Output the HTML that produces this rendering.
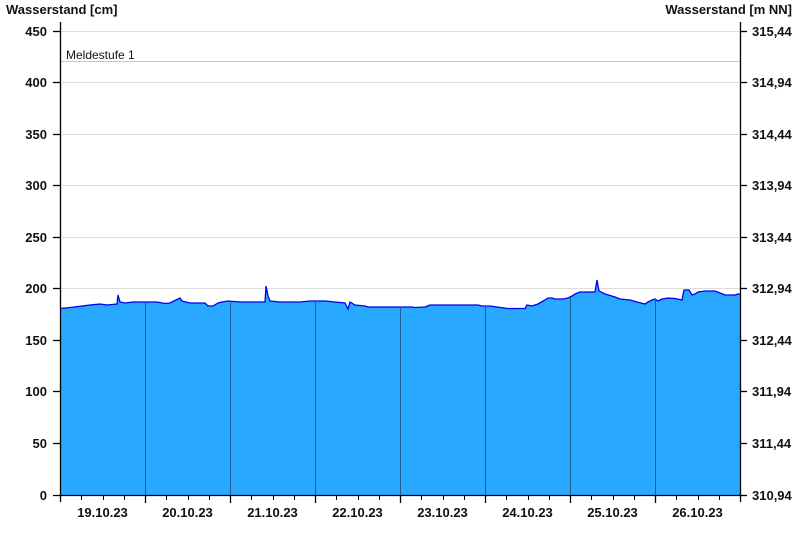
<!DOCTYPE html>
<html><head><meta charset="utf-8"><style>
html,body{margin:0;padding:0;background:#fff;}
svg{display:block;}
text{font-family:"Liberation Sans",Arial,sans-serif;}
.b{font-weight:bold;font-size:13px;fill:#111;}
</style></head><body>
<svg width="800" height="550" viewBox="0 0 800 550" xmlns="http://www.w3.org/2000/svg">
<rect width="800" height="550" fill="#fff"/>
<g stroke="#dcdcdc" stroke-width="1">
<line x1="60" x2="740" y1="31.5" y2="31.5"/>
<line x1="60" x2="740" y1="82.5" y2="82.5"/>
<line x1="60" x2="740" y1="134.5" y2="134.5"/>
<line x1="60" x2="740" y1="185.5" y2="185.5"/>
<line x1="60" x2="740" y1="237.5" y2="237.5"/>
<line x1="60" x2="740" y1="288.5" y2="288.5"/>
</g>
<line x1="60" x2="740" y1="61.5" y2="61.5" stroke="#f0c850" stroke-width="1"/>
<text x="66" y="59" font-size="12" fill="#111">Meldestufe 1</text>
<polygon fill="#29a8ff" stroke="none" points="60,495 60,308.5 70,307.5 78,306.5 90,305 100,304 107,305 117,304 118,295 120,302 125,303 133,302 145,302 157,302 165,303.5 170,303 180,298 182,301 190,303 205,303 208,306 213,306 218,303 222,302 228,301 240,302 248,302 265,302 266,286 268,296 270,301 280,302 300,302 310,301 325,301 335,302 345,303 348,309 350,302 355,305 365,306 368,307 412,307 415,307.5 425,307 430,305 478,305 482,306 490,306 497,307 508,308.5 525,308.5 527,305 532,306 538,304 545,300 548,298 552,298 555,299 563,299 568,298 572,296 575,294 580,292 595,292 597,280 599,291 605,294 615,297 620,299 630,300 637,302 645,304 648,302 652,300 655,299 658,301 662,299 668,298 675,298.5 682,300 684,290 689,290 692,295 695,294 698,292 705,291 715,291 720,293 725,295 735,295 738,294 740,294 740,495"/>
<polyline fill="none" stroke="#0000ee" stroke-width="1.3" points="60,308.5 70,307.5 78,306.5 90,305 100,304 107,305 117,304 118,295 120,302 125,303 133,302 145,302 157,302 165,303.5 170,303 180,298 182,301 190,303 205,303 208,306 213,306 218,303 222,302 228,301 240,302 248,302 265,302 266,286 268,296 270,301 280,302 300,302 310,301 325,301 335,302 345,303 348,309 350,302 355,305 365,306 368,307 412,307 415,307.5 425,307 430,305 478,305 482,306 490,306 497,307 508,308.5 525,308.5 527,305 532,306 538,304 545,300 548,298 552,298 555,299 563,299 568,298 572,296 575,294 580,292 595,292 597,280 599,291 605,294 615,297 620,299 630,300 637,302 645,304 648,302 652,300 655,299 658,301 662,299 668,298 675,298.5 682,300 684,290 689,290 692,295 695,294 698,292 705,291 715,291 720,293 725,295 735,295 738,294 740,294"/>
<g stroke="#1f5f8f" stroke-width="1">
<line x1="145.5" x2="145.5" y1="302" y2="495"/>
<line x1="230.5" x2="230.5" y1="301" y2="495"/>
<line x1="315.5" x2="315.5" y1="301" y2="495"/>
<line x1="400.5" x2="400.5" y1="307" y2="495"/>
<line x1="485.5" x2="485.5" y1="306" y2="495"/>
<line x1="570.5" x2="570.5" y1="297" y2="495"/>
<line x1="655.5" x2="655.5" y1="299" y2="495"/>
</g>
<g stroke="#000" stroke-width="1.3">
<line x1="60.5" x2="60.5" y1="22" y2="502"/>
<line x1="740.5" x2="740.5" y1="22" y2="502"/>
<line x1="53" x2="740" y1="495.5" y2="495.5"/>
<line x1="53" x2="60" y1="31.5" y2="31.5"/><line x1="53" x2="60" y1="82.5" y2="82.5"/><line x1="53" x2="60" y1="134.5" y2="134.5"/><line x1="53" x2="60" y1="185.5" y2="185.5"/><line x1="53" x2="60" y1="237.5" y2="237.5"/><line x1="53" x2="60" y1="288.5" y2="288.5"/><line x1="53" x2="60" y1="340.5" y2="340.5"/><line x1="53" x2="60" y1="391.5" y2="391.5"/><line x1="53" x2="60" y1="443.5" y2="443.5"/>
<line x1="740" x2="747" y1="31.5" y2="31.5"/><line x1="740" x2="747" y1="82.5" y2="82.5"/><line x1="740" x2="747" y1="134.5" y2="134.5"/><line x1="740" x2="747" y1="185.5" y2="185.5"/><line x1="740" x2="747" y1="237.5" y2="237.5"/><line x1="740" x2="747" y1="288.5" y2="288.5"/><line x1="740" x2="747" y1="340.5" y2="340.5"/><line x1="740" x2="747" y1="391.5" y2="391.5"/><line x1="740" x2="747" y1="443.5" y2="443.5"/><line x1="740" x2="747" y1="495.5" y2="495.5"/>
<line x1="145.5" x2="145.5" y1="495" y2="503"/><line x1="230.5" x2="230.5" y1="495" y2="503"/><line x1="315.5" x2="315.5" y1="495" y2="503"/><line x1="400.5" x2="400.5" y1="495" y2="503"/><line x1="485.5" x2="485.5" y1="495" y2="503"/><line x1="570.5" x2="570.5" y1="495" y2="503"/><line x1="655.5" x2="655.5" y1="495" y2="503"/>
</g>
<g stroke="#000" stroke-width="1">
<line x1="81.5" x2="81.5" y1="495" y2="500"/><line x1="103.5" x2="103.5" y1="495" y2="500"/><line x1="124.5" x2="124.5" y1="495" y2="500"/>
<line x1="166.5" x2="166.5" y1="495" y2="500"/><line x1="188.5" x2="188.5" y1="495" y2="500"/><line x1="209.5" x2="209.5" y1="495" y2="500"/>
<line x1="251.5" x2="251.5" y1="495" y2="500"/><line x1="273.5" x2="273.5" y1="495" y2="500"/><line x1="294.5" x2="294.5" y1="495" y2="500"/>
<line x1="336.5" x2="336.5" y1="495" y2="500"/><line x1="358.5" x2="358.5" y1="495" y2="500"/><line x1="379.5" x2="379.5" y1="495" y2="500"/>
<line x1="421.5" x2="421.5" y1="495" y2="500"/><line x1="443.5" x2="443.5" y1="495" y2="500"/><line x1="464.5" x2="464.5" y1="495" y2="500"/>
<line x1="506.5" x2="506.5" y1="495" y2="500"/><line x1="528.5" x2="528.5" y1="495" y2="500"/><line x1="549.5" x2="549.5" y1="495" y2="500"/>
<line x1="591.5" x2="591.5" y1="495" y2="500"/><line x1="613.5" x2="613.5" y1="495" y2="500"/><line x1="634.5" x2="634.5" y1="495" y2="500"/>
<line x1="676.5" x2="676.5" y1="495" y2="500"/><line x1="698.5" x2="698.5" y1="495" y2="500"/><line x1="719.5" x2="719.5" y1="495" y2="500"/>
</g>
<text class="b" x="6" y="14">Wasserstand [cm]</text>
<text class="b" x="792" y="14" text-anchor="end">Wasserstand [m NN]</text>
<g class="b" text-anchor="end">
<text class="b" x="47" y="36">450</text><text class="b" x="47" y="87">400</text><text class="b" x="47" y="139">350</text><text class="b" x="47" y="190">300</text><text class="b" x="47" y="242">250</text><text class="b" x="47" y="293">200</text><text class="b" x="47" y="345">150</text><text class="b" x="47" y="396">100</text><text class="b" x="47" y="448">50</text><text class="b" x="47" y="500">0</text>
</g>
<text class="b" x="752" y="36">315,44</text><text class="b" x="752" y="87">314,94</text><text class="b" x="752" y="139">314,44</text><text class="b" x="752" y="190">313,94</text><text class="b" x="752" y="242">313,44</text><text class="b" x="752" y="293">312,94</text><text class="b" x="752" y="345">312,44</text><text class="b" x="752" y="396">311,94</text><text class="b" x="752" y="448">311,44</text><text class="b" x="752" y="500">310,94</text>
<g text-anchor="middle">
<text class="b" x="102.5" y="517">19.10.23</text><text class="b" x="187.5" y="517">20.10.23</text><text class="b" x="272.5" y="517">21.10.23</text><text class="b" x="357.5" y="517">22.10.23</text><text class="b" x="442.5" y="517">23.10.23</text><text class="b" x="527.5" y="517">24.10.23</text><text class="b" x="612.5" y="517">25.10.23</text><text class="b" x="697.5" y="517">26.10.23</text>
</g>
</svg>
</body></html>
